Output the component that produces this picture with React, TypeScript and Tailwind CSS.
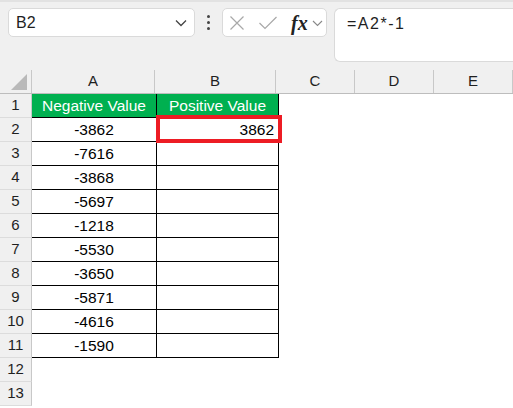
import React from "react";

const values = ["-3862", "-7616", "-3868", "-5697", "-1218", "-5530", "-3650", "-5871", "-4616", "-1590"];

const font = { fontFamily: '"Liberation Sans", Arial, sans-serif' };

const ColHeader = () => (
  <div className="flex h-[24px] bg-[#f0f0f0] border-b border-[#bdbdbd] text-[15px] text-[#1f1f1f]">
    <div className="w-[32px] h-full border-r border-[#c8c8c8] flex items-end justify-end pr-[4px] pb-[3px]">
      <svg width="16" height="16" viewBox="0 0 16 16">
        <polygon points="16,0 16,16 0,16" fill="#b9b9b9" />
      </svg>
    </div>
    <div className="w-[125px] border-r border-[#c8c8c8] flex items-center justify-center">A</div>
    <div className="w-[122px] border-r border-[#c8c8c8] flex items-center justify-center">B</div>
    <div className="w-[80px] border-r border-[#c8c8c8] flex items-center justify-center">C</div>
    <div className="w-[80px] border-r border-[#c8c8c8] flex items-center justify-center">D</div>
    <div className="w-[80px] border-r border-[#c8c8c8] flex items-center justify-center">E</div>
  </div>
);

const RowNum = ({ n }: { n: number }) => (
  <div className="w-[32px] h-full shrink-0 bg-[#f0f0f0] border-r border-b border-r-[#c8c8c8] border-b-[#dcdcdc] flex items-center justify-center text-[15px] text-[#1f1f1f]">
    {n}
  </div>
);

export default function App() {
  return (
    <div className="w-[513px] h-[408px] overflow-hidden bg-white" style={font}>
      <div className="h-[70px] bg-[#f0f0f0] border-t-2 border-[#e2e2e2] flex items-start pt-[6px] pl-[8px] gap-0">
        <div className="w-[187px] h-[29px] bg-white border border-[#dadada] rounded-[5px] flex items-center justify-between pl-[7px] pr-[7px] text-[16px] text-[#1f1f1f]">
          <span>B2</span>
          <svg width="12" height="8" viewBox="0 0 12 8" fill="none" stroke="#444" strokeWidth="1.3">
            <path d="M1 1.5 L6 6.5 L11 1.5" />
          </svg>
        </div>
        <div className="w-[27px] h-[29px] flex flex-col items-center justify-center gap-[3px]">
          <span className="w-[3px] h-[3px] bg-[#444] rounded-full"></span>
          <span className="w-[3px] h-[3px] bg-[#444] rounded-full"></span>
          <span className="w-[3px] h-[3px] bg-[#444] rounded-full"></span>
        </div>
        <div className="w-[105px] h-[29px] bg-white border border-[#dadada] rounded-[5px] flex items-center pl-[5px] pr-[2px]">
          <svg width="16" height="16" viewBox="0 0 16 16" fill="none" stroke="#a8a8a8" strokeWidth="1.2" className="ml-[1px]">
            <path d="M1.5 1.5 L14.5 14.5 M14.5 1.5 L1.5 14.5" />
          </svg>
          <svg width="20" height="16" viewBox="0 0 20 16" fill="none" stroke="#a8a8a8" strokeWidth="1.2" className="ml-[13px]">
            <path d="M1.5 8 L7 13.5 L18.5 2" />
          </svg>
          <span className="ml-[13px] italic text-[20px] text-[#222] leading-none font-semibold" style={{ fontFamily: '"Liberation Serif", "Times New Roman", serif' }}>
            fx
          </span>
          <svg width="11" height="7" viewBox="0 0 11 7" fill="none" stroke="#888" strokeWidth="1.1" className="ml-[4px] mt-[2px]">
            <path d="M1 1 L5.5 5.5 L10 1" />
          </svg>
        </div>
        <div className="ml-[7px] flex-1 h-[54px] bg-white border border-[#dadada] rounded-l-[6px] border-r-0 pl-[12px] pt-[3px] text-[16px] tracking-[1.5px] text-[#1f1f1f]">
          =A2*-1
        </div>
      </div>
      <div className="relative">
        <ColHeader />
        {Array.from({ length: 13 }).map((_, i) => {
          const n = i + 1;
          return (
            <div key={n} className="flex h-[24px]">
              <RowNum n={n} />
              {n === 1 ? (
                <>
                  <div className="w-[125px] h-full bg-[#00b050] text-white border-r border-b border-black flex items-center justify-center text-[15.5px]">
                    Negative Value
                  </div>
                  <div className="w-[122px] h-full bg-[#00b050] text-white border-r border-b border-black flex items-center justify-center text-[15.5px]">
                    Positive Value
                  </div>
                </>
              ) : n <= 11 ? (
                <>
                  <div className="w-[125px] h-full border-r border-b border-black flex items-center justify-center text-[15.5px] text-black">
                    {values[n - 2]}
                  </div>
                  <div className="w-[122px] h-full border-r border-b border-black flex items-center justify-end pr-[4px] text-[15.5px] text-black">
                    {n === 2 ? "3862" : ""}
                  </div>
                </>
              ) : null}
            </div>
          );
        })}
        <div className="absolute left-[156px] top-[45px] w-[126px] h-[28px] border-4 border-[#ed1c24]"></div>
      </div>
    </div>
  );
}
